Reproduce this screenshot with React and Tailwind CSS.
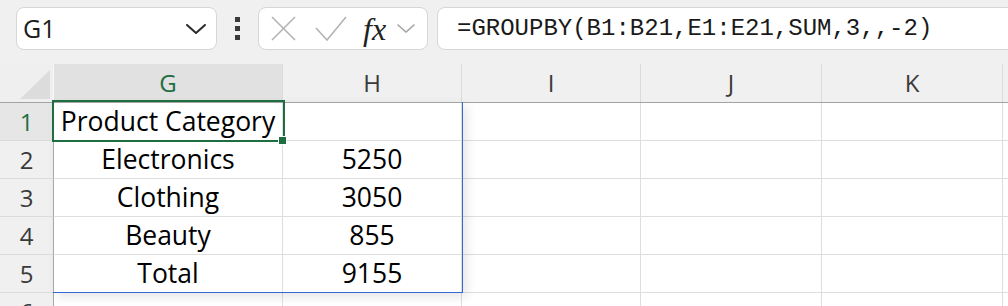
import React from "react";

const cellFont = { fontFamily: '"Open Sans", "Noto Sans", sans-serif' };

const cols = [
  { key: "G", label: "G", w: "w-[229px]" },
  { key: "H", label: "H", w: "w-[179px]" },
  { key: "I", label: "I", w: "w-[179px]" },
  { key: "J", label: "J", w: "w-[181px]" },
  { key: "K", label: "K", w: "w-[181px]" },
  { key: "L", label: "", w: "w-[181px]" },
];

const rows = [
  ["Product Category", ""],
  ["Electronics", "5250"],
  ["Clothing", "3050"],
  ["Beauty", "855"],
  ["Total", "9155"],
  ["", ""],
];

function Chevron({ className, color = "#333", sw = 2 }) {
  return (
    <svg className={className} viewBox="0 0 20 10" fill="none">
      <polyline points="1,1 10,9 19,1" stroke={color} strokeWidth={sw} strokeLinecap="round" strokeLinejoin="round" />
    </svg>
  );
}

export default function App() {
  return (
    <div className="w-[1008px] h-[306px] overflow-hidden bg-[#f0f0f0] relative" style={cellFont}>
      {/* Toolbar */}
      <div className="h-[64px] flex items-start pt-[7px] pl-[16px]">
        <div className="w-[201px] shrink-0 h-[43px] bg-white border border-[#d6d6d6] rounded-[8px] flex items-center pl-[6px] pr-[10px]">
          <span className="text-[25px] text-[#1b1b1b] leading-none">G1</span>
          <Chevron className="ml-auto w-[20px] h-[10px]" color="#2a2a2a" sw={2} />
        </div>
        <div className="w-[41px] shrink-0 h-[43px] flex flex-col items-center justify-center gap-[4px]">
          <div className="w-[5px] h-[5px] bg-[#3a3a3a]" />
          <div className="w-[5px] h-[5px] bg-[#3a3a3a]" />
          <div className="w-[5px] h-[5px] bg-[#3a3a3a]" />
        </div>
        <div className="w-[170px] shrink-0 h-[43px] bg-white border border-[#d6d6d6] rounded-[8px] flex items-center">
          <svg className="ml-[12px] w-[25px] h-[25px] shrink-0" viewBox="0 0 25 25" fill="none">
            <line x1="1" y1="1" x2="24" y2="24" stroke="#b3b3b3" strokeWidth="1.6" />
            <line x1="24" y1="1" x2="1" y2="24" stroke="#b3b3b3" strokeWidth="1.6" />
          </svg>
          <svg className="ml-[19px] w-[32px] h-[25px] shrink-0" viewBox="0 0 32 25" fill="none">
            <polyline points="1,12 12,24 31,1" stroke="#b3b3b3" strokeWidth="1.6" fill="none" />
          </svg>
          <span
            className="ml-[16px] text-[32px] leading-none text-[#222] italic"
            style={{ fontFamily: '"Liberation Serif", "DejaVu Serif", serif' }}
          >
            fx
          </span>
          <Chevron className="ml-[11px] w-[18px] h-[9px] shrink-0" color="#a8a8a8" sw={1.6} />
        </div>
        <div className="ml-[9px] w-[620px] shrink-0 h-[43px] bg-white border border-[#d6d6d6] rounded-[8px] flex items-center pl-[19px]">
          <span
            className="text-[24px] leading-none text-[#1a1a1a] whitespace-nowrap"
            style={{ fontFamily: '"Liberation Mono", "DejaVu Sans Mono", monospace' }}
          >
            =GROUPBY(B1:B21,E1:E21,SUM,3,,-2)
          </span>
        </div>
      </div>

      {/* Grid */}
      <div className="relative">
        {/* Column header row */}
        <div className="flex h-[39px] border-b border-[#a3a3a3]">
          <div className="w-[54px] shrink-0 h-full bg-[#efefef] border-r border-[#f7f7f7] relative">
            <svg className="absolute left-[20px] top-[6px] w-[30px] h-[29px]" viewBox="0 0 30 29">
              <polygon points="30,0 30,29 0,29" fill="#dcdcdc" />
            </svg>
          </div>
          {cols.map((c) => (
            <div
              key={c.key}
              className={`${c.w} shrink-0 h-full flex items-center justify-center border-r border-[#dadada] text-[24px] ${
                c.key === "G" ? "bg-[#e1e1e1] text-[#1e6e42]" : "bg-[#f0f0f0] text-[#3a3a3a]"
              }`}
            >
              {c.label}
            </div>
          ))}
        </div>

        {/* Body rows */}
        {rows.map((r, i) => (
          <div key={i} className="flex h-[38px]">
            <div
              className={`w-[54px] shrink-0 h-full flex items-center justify-center border-r border-[#a8a8a8] border-b border-b-[#dcdcdc] text-[24px] ${
                i === 0 ? "bg-[#e6e6e6] text-[#1e6e42]" : "bg-[#f0f0f0] text-[#3a3a3a]"
              }`}
            >
              {i + 1}
            </div>
            {cols.map((c, j) => (
              <div
                key={c.key}
                className={`${c.w} shrink-0 h-full bg-white border-r border-b border-[#dedede] flex items-center justify-center text-[26.5px] text-black whitespace-nowrap`}
              >
                {j < 2 ? r[j] : ""}
              </div>
            ))}
          </div>
        ))}

        {/* Spill range */}
        <div className="absolute left-[53px] top-[38px] w-[410px] h-[191px] border-r border-b border-[#2f6bd3] shadow-[4px_4px_10px_rgba(0,0,0,0.10)] pointer-events-none" />

        {/* Active cell selection */}
        <div className="absolute left-[52px] top-[36px] w-[233px] h-[42px] border-2 border-[#1e6e42] pointer-events-none" />
        <div className="absolute left-[278px] top-[72px] w-[9px] h-[9px] bg-[#1e6e42] border border-white pointer-events-none" />
      </div>
    </div>
  );
}
